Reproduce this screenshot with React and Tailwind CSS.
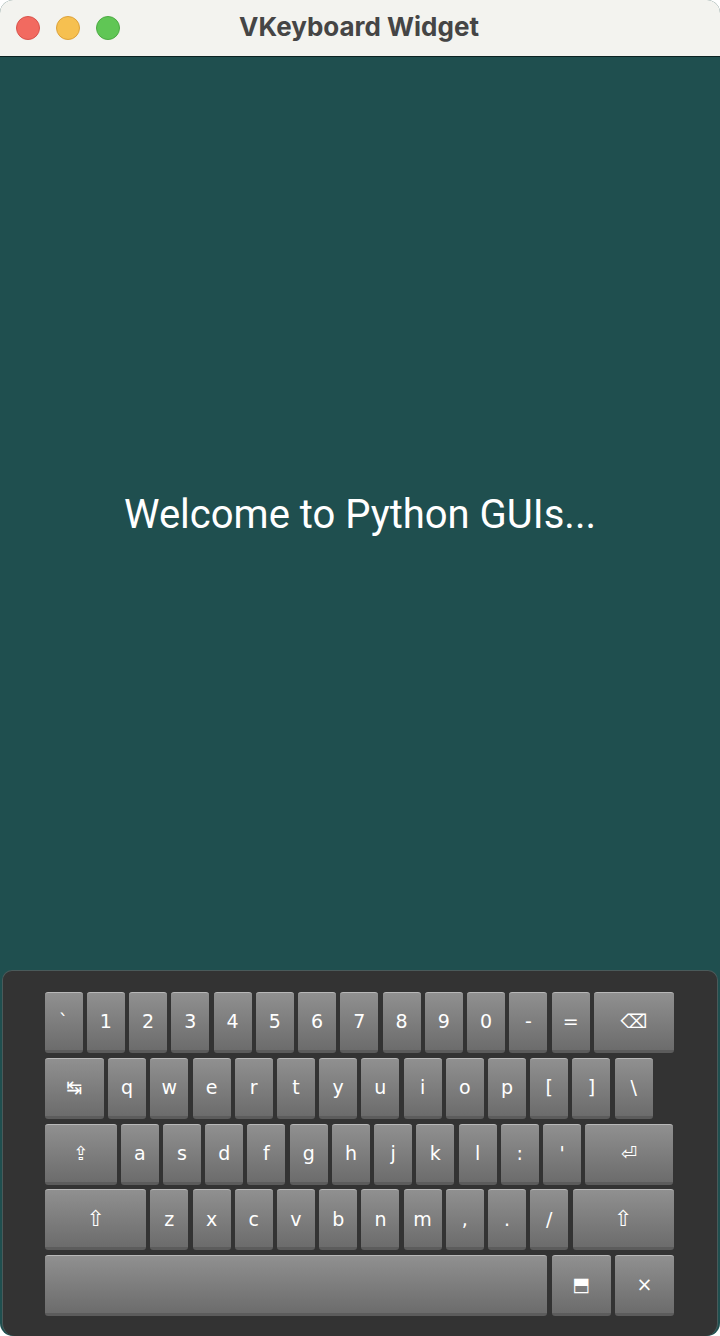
const rows = [
  {
    gap: 'gap-[4.25px]',
    keys: [
      ['`'], ['1'], ['2'], ['3'], ['4'], ['5'], ['6'], ['7'], ['8'], ['9'], ['0'], ['-'], ['='],
      ['⌫', 'w-[80px]'],
    ],
  },
  {
    gap: 'gap-[4.23px]',
    keys: [
      ['↹', 'w-[59.27px]'],
      ['q'], ['w'], ['e'], ['r'], ['t'], ['y'], ['u'], ['i'], ['o'], ['p'], ['['], [']'], ['\\'],
    ],
  },
  {
    gap: 'gap-[4.22px]',
    keys: [
      ['⇪', 'w-[72px]'],
      ['a'], ['s'], ['d'], ['f'], ['g'], ['h'], ['j'], ['k'], ['l'], [':'], ["'"],
      ['⏎', 'w-[88px]'],
    ],
  },
  {
    gap: 'gap-[4.23px]',
    keys: [
      ['⇧', 'w-[101.5px]', 'text-[22px]'],
      ['z'], ['x'], ['c'], ['v'], ['b'], ['n'], ['m'], [','], ['.'], ['/'],
      ['⇧', 'w-[101px]', 'text-[22px]'],
    ],
  },
  {
    gap: 'gap-[4.25px]',
    keys: [
      ['', 'w-[502.75px]'],
      ['⬒', 'w-[59.125px]'],
      ['×', 'w-[59.125px]'],
    ],
  },
]

function Key({ label, width, size }) {
  return (
    <button
      className={`${width || 'w-[38px]'} ${size || 'text-[19px]'} h-[61px] shrink-0 rounded-[3px] border-t border-t-[#b8b8b8] border-b-[3px] border-b-[#5c5c5c] bg-gradient-to-b from-[#909090] to-[#6c6c6c] flex items-center justify-center text-white font-['DejaVu_Sans',sans-serif]`}
    >
      {label}
    </button>
  )
}

export default function App() {
  return (
    <div className="w-[720px] h-[1336px] flex flex-col overflow-hidden rounded-[13px] bg-[#1f4f4f] font-['Roboto',sans-serif]">
      <div className="h-[57px] shrink-0 relative flex items-center justify-center pb-[3px] pr-[2px] bg-[#f3f3ef] border-b border-b-[#0b2222]">
        <div className="absolute left-[16px] top-[16px] flex gap-[16px]">
          <span className="w-[24px] h-[24px] rounded-full bg-[#f26a60] border border-[#d9534c]" />
          <span className="w-[24px] h-[24px] rounded-full bg-[#f6c050] border border-[#dda23a]" />
          <span className="w-[24px] h-[24px] rounded-full bg-[#60c655] border border-[#4cab43]" />
        </div>
        <span className="text-[26px] font-bold text-[#454545] font-['Inter',sans-serif]">VKeyboard Widget</span>
      </div>

      <div className="flex-1 flex items-center justify-center pt-[3px] text-[40px] text-white">
        Welcome to Python GUIs...
      </div>

      <div className="h-[366px] shrink-0 mx-[2px] rounded-t-[10px] rounded-b-[13px] border border-[#4a5a5a] border-b-0 bg-[#333333] pt-[21px] pl-[41.6px] flex flex-col gap-[4.75px]">
        {rows.map((row, i) => (
          <div key={i} className={`flex ${row.gap}`}>
            {row.keys.map((k, j) => (
              <Key key={j} label={k[0]} width={k[1]} size={k[2]} />
            ))}
          </div>
        ))}
      </div>
    </div>
  )
}
